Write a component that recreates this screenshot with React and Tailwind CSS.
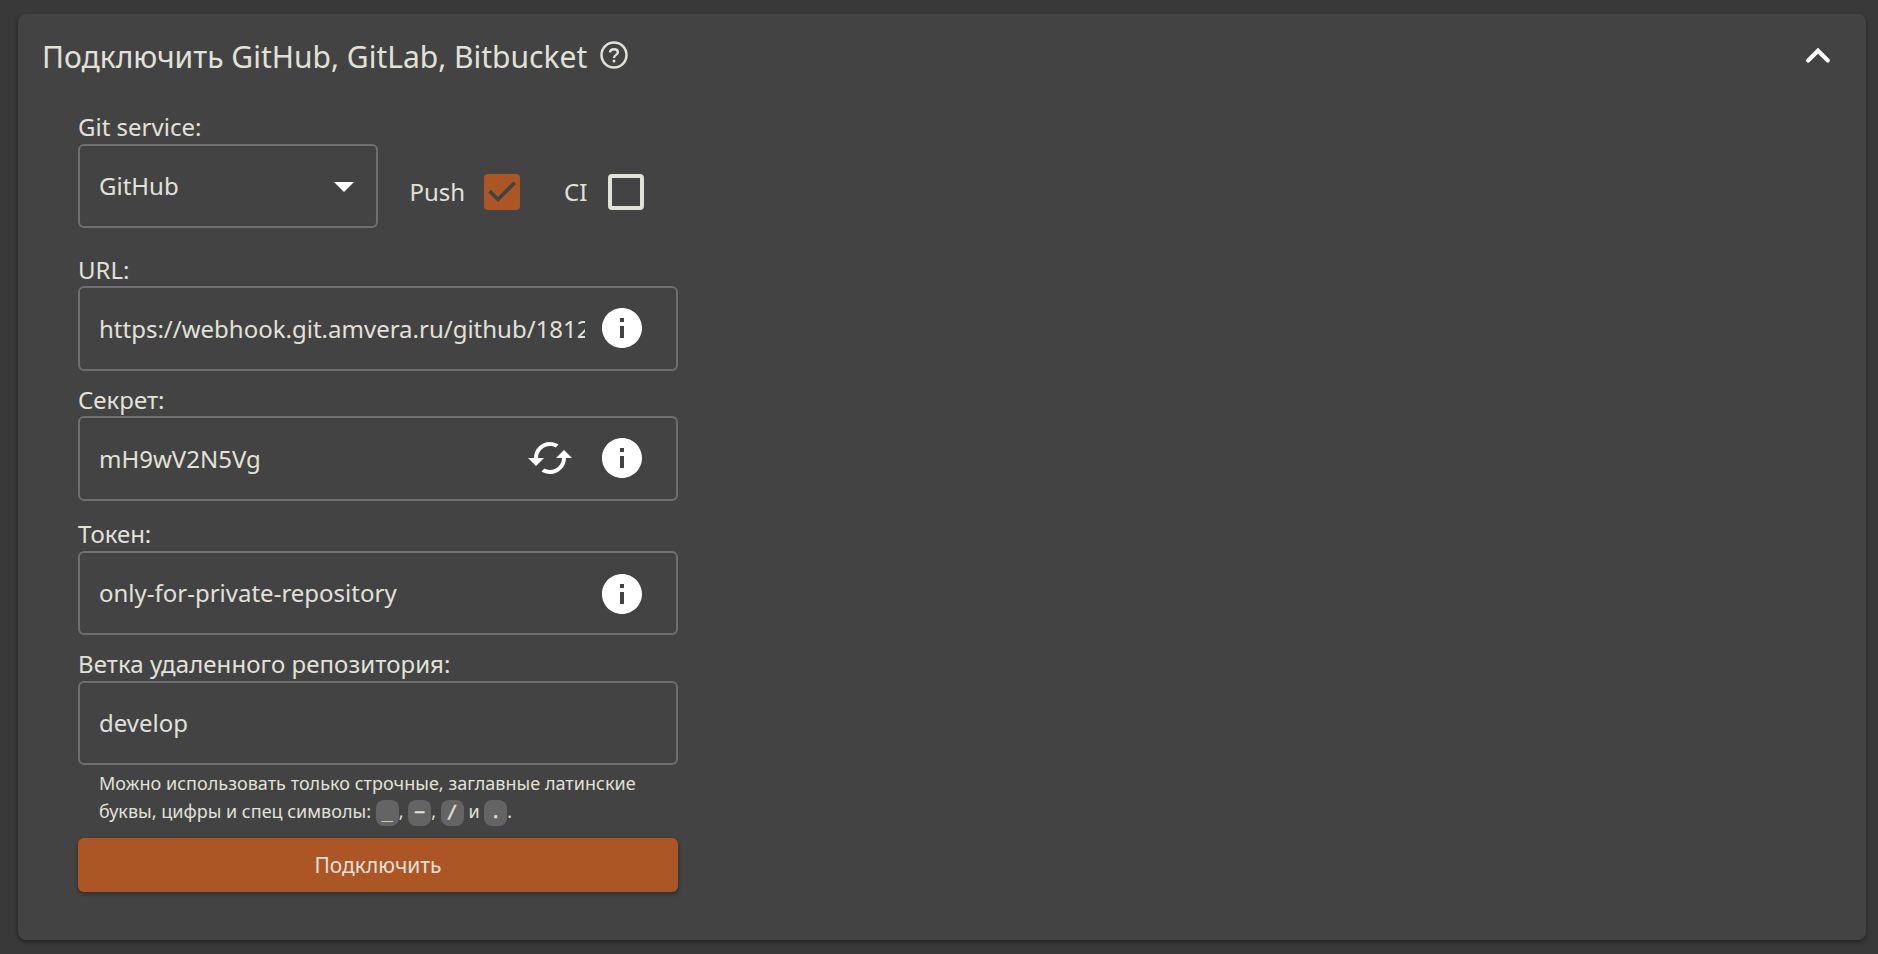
const icons = {
  info: "M12 2C6.48 2 2 6.48 2 12s4.48 10 10 10 10-4.48 10-10S17.52 2 12 2zm1 15h-2v-6h2v6zm0-8h-2V7h2v2z",
  cached:
    "M19 8l-4 4h3c0 3.31-2.69 6-6 6-1.01 0-1.97-.25-2.8-.7l-1.46 1.46C8.97 19.54 10.43 20 12 20c4.42 0 8-3.58 8-8h3l-4-4zM6 12c0-3.31 2.69-6 6-6 1.01 0 1.97.25 2.8.7l1.46-1.46C15.03 4.46 13.57 4 12 4c-4.42 0-8 3.58-8 8H1l4 4 4-4H6z",
  drop: "M7 10l5 5 5-5z",
};

function Icon({ name, className }) {
  return (
    <svg viewBox="0 0 24 24" fill="currentColor" className={`shrink-0 ${className}`}>
      <path d={icons[name]} />
    </svg>
  );
}

function HelpIcon({ className }) {
  return (
    <svg viewBox="0 0 28 28" fill="none" stroke="currentColor" className={`size-7 shrink-0 ${className}`}>
      <circle cx="14" cy="14" r="12.5" strokeWidth="2.5" />
      <path d="M10 11.4C10.2 9.5 11.8 8.3 14 8.3C16.3 8.3 17.9 9.6 17.9 11.3C17.9 13.9 14 13.9 14 17" strokeWidth="2.4" />
      <circle cx="14" cy="19.9" r="1.5" fill="currentColor" stroke="none" />
    </svg>
  );
}

function Label({ className = "", children }) {
  return <div className={`h-8 text-2xl leading-8 whitespace-nowrap ${className}`}>{children}</div>;
}

function Field({ label, value, className = "", labelClass = "", textClass = "pt-px", box = "h-[85px] pb-px", refresh, info }) {
  return (
    <div className={className}>
      <Label className={labelClass}>{label}</Label>
      <div className={`flex w-[600px] items-center rounded-md border-2 border-[#6f6f6f] pr-[30px] pl-[19px] ${box}`}>
        <span className={`min-w-0 flex-1 overflow-hidden text-2xl leading-8 whitespace-nowrap ${textClass}`}>{value}</span>
        {refresh && <Icon name="cached" className="mr-[11px] size-12 text-white" />}
        {info && <Icon name="info" className="ml-[13px] size-12 text-white" />}
      </div>
    </div>
  );
}

function Key({ children }) {
  return (
    <code className="inline-block h-[26px] w-[23px] rounded-lg bg-[#646464] text-center align-middle font-['DejaVu_Sans_Mono',monospace] text-lg leading-6 [-webkit-text-stroke:0.4px]">
      {children}
    </code>
  );
}

export default function App() {
  return (
    <div className="h-[954px] w-[1878px] overflow-hidden bg-[#393939] pt-3.5 pl-[18px] font-['Noto_Sans',sans-serif] text-[#e1e1da]">
      <section className="h-[926px] w-[1848px] rounded-lg bg-[#434343] shadow-[0_2px_4px_rgba(0,0,0,0.4)]">
        <header className="flex h-[97px] items-start pt-[18px] pr-6 pl-6">
          <h1 className="mt-[5px] text-[30px] leading-10 font-normal whitespace-nowrap">
            Подключить GitHub, GitLab, Bitbucket
          </h1>
          <HelpIcon className="mt-[9px] ml-[13px]" />
          <svg viewBox="0 0 24 24" className="ml-auto size-12 fill-none stroke-white">
            <path d="M7.1 14.3L12 9.4L16.9 14.3" strokeWidth="2.1" strokeLinecap="round" />
          </svg>
        </header>

        <div className="pl-[60px]">
          <Label>Git service:</Label>
          <div className="mt-px flex">
            <div className="flex h-[84px] w-[300px] items-center justify-between rounded-md border-2 border-[#6f6f6f] pr-2 pl-[19px]">
              <span className="text-2xl leading-8">GitHub</span>
              <Icon name="drop" className="size-12 text-white" />
            </div>
            <div className="mt-[30px] flex h-9 items-center pl-[31.5px]">
              <span className="w-[74.5px] text-2xl leading-8">Push</span>
              <span className="flex size-9 items-center justify-center rounded bg-[#ad5625]">
                <svg viewBox="0 0 36 36" className="size-9 fill-none stroke-[#434343]">
                  <path d="M5.5 17.2L14 25.3L30.8 8.6" strokeWidth="3.8" />
                </svg>
              </span>
              <span className="ml-11 w-11 text-2xl leading-8">CI</span>
              <span className="size-9 rounded border-4 border-[#e1e1da]" />
            </div>
          </div>

          <Field className="mt-[26px]" label="URL:" value="https://webhook.git.amvera.ru/github/1812" info />
          <Field className="mt-[13px]" label="Секрет:" value="mH9wV2N5Vg" refresh info />
          <Field
            className="mt-[17px]"
            labelClass="mb-px"
            textClass="pb-px"
            box="h-[84px] pt-px"
            label="Токен:"
            value="only-for-private-repository"
            info
          />
          <Field
            className="mt-[13px]"
            labelClass="mb-px tracking-[0.07px]"
            box="h-[84px] pb-px"
            label="Ветка удаленного репозитория:"
            value="develop"
          />

          <p className="mt-[4px] h-14 pl-[21px] text-lg leading-7 whitespace-nowrap">
            <span className="tracking-[0.03px]">Можно использовать только строчные, заглавные латинские</span>
            <br />
            буквы, цифры и спец символы: <Key>_</Key>, <Key>−</Key>, <Key>/</Key> и <Key>.</Key>.
          </p>
          <button className="mt-[13px] block h-[54px] w-[600px] rounded-md bg-[#ad5625] text-[21px] leading-8 shadow-[0_2px_4px_rgba(0,0,0,0.35)]">
            Подключить
          </button>
        </div>
      </section>
    </div>
  );
}
